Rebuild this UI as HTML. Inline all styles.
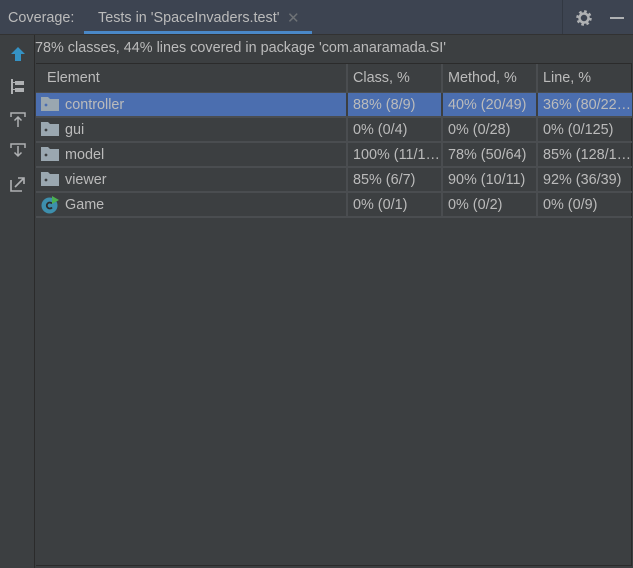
<!DOCTYPE html>
<html><head><style>
*{margin:0;padding:0;box-sizing:border-box}
body{width:633px;height:568px;background:#3c3f41;font-family:"Liberation Sans",sans-serif;font-size:14.4px;color:#bbbbbb;position:relative;overflow:hidden}
.top{position:absolute;left:0;top:0;width:633px;height:35px;background:#3d4451;border-bottom:1px solid #323232}
.top .vl{position:absolute;left:562px;top:0;width:1px;height:34px;background:#323842}
.t{position:absolute;top:10px;white-space:nowrap}
.ul{position:absolute;left:84px;top:31px;width:228px;height:3px;background:#4a88c7}
.side{position:absolute;left:0;top:35px;width:35px;height:533px;border-right:1px solid #2b2b2b}
.sum{position:absolute;left:35px;top:40px;white-space:nowrap}
.tbl{position:absolute;left:36px;top:63px;width:596px;height:503px;border-top:1px solid #2b2b2b;border-bottom:1px solid #2b2b2b;border-right:1px solid #2b2b2b}
.row{position:absolute;left:0;width:596px;height:25px;border-bottom:2px solid #4a4d50}
.row div{position:absolute;top:0;height:23px;line-height:24px;white-space:nowrap;overflow:hidden}
.c1{left:0;width:310px;padding-left:29px}
.c2{left:310px;width:95px;padding-left:5px;border-left:2px solid #4a4d50}
.c3{left:405px;width:95px;padding-left:5px;border-left:2px solid #4a4d50}
.c4{left:500px;width:96px;padding-left:5px;border-left:2px solid #4a4d50}
.hdr{top:0;height:30px}
.hdr div{height:28px;line-height:28px}
.sel{background:#4b6eaf}
.sel .c2,.sel .c3,.sel .c4{border-left-color:#3c3f41}
.fold{position:absolute;left:5px;top:4px;width:18px;height:14px}
</style></head><body>
<div class="top"><div class="vl"></div>
<span class="t" style="left:8px">Coverage:</span>
<span class="t" style="left:98px">Tests in 'SpaceInvaders.test'</span>
<span class="t" style="left:287px;color:#6e7276;font-size:15px;top:9px">✕</span>
<svg style="position:absolute;left:575px;top:9px" width="18" height="18" viewBox="0 0 18 18"><circle cx="9" cy="9" r="6" fill="none" stroke="#afb1b3" stroke-width="3.5" stroke-dasharray="2.4 2.3"/><circle cx="9" cy="9" r="4.5" fill="none" stroke="#afb1b3" stroke-width="2.5"/></svg>
<div style="position:absolute;left:610px;top:17px;width:14px;height:2px;background:#afb1b3"></div>
</div>
<div class="ul"></div>
<div class="side">
<svg style="position:absolute;left:9px;top:10px" width="18" height="18" viewBox="0 0 18 18"><path d="M9 2 L16 9 H12 V16 H6 V9 H2 Z" fill="#3592c4"/></svg>
<svg style="position:absolute;left:9px;top:43px" width="18" height="18" viewBox="0 0 18 18" fill="#afb1b3"><rect x="2" y="1" width="2" height="15"/><rect x="6" y="3" width="9" height="4"/><rect x="6" y="10" width="9" height="4"/><rect x="4" y="4" width="2" height="1"/><rect x="4" y="11" width="2" height="1"/></svg>
<svg style="position:absolute;left:9px;top:76px" width="18" height="18" viewBox="0 0 18 18" fill="none" stroke="#afb1b3" stroke-width="1.5"><path d="M2 6V2H16V6"/><path d="M9 16V6M5.5 9.5L9 6L12.5 9.5"/></svg>
<svg style="position:absolute;left:9px;top:107px" width="18" height="18" viewBox="0 0 18 18" fill="none" stroke="#afb1b3" stroke-width="1.5"><path d="M2 6V2H16V6"/><path d="M9 4V14M5.5 10.5L9 14L12.5 10.5"/></svg>
<svg style="position:absolute;left:9px;top:140px" width="18" height="18" viewBox="0 0 18 18" fill="none" stroke="#afb1b3" stroke-width="1.6"><path d="M2 5V16H13"/><path d="M6 12L15 3M9 3H15V9"/></svg>
</div>
<div class="sum">78% classes, 44% lines covered in package 'com.anaramada.SI'</div>
<div class="tbl">
<div class="row hdr"><div class="c1" style="padding-left:11px">Element</div><div class="c2">Class, %</div><div class="c3">Method, %</div><div class="c4">Line, %</div></div>
<div class="row sel" style="top:29px"><svg class="fold" viewBox="0 0 18 14"><path d="M0 0H7L9 2H18V14H0Z" fill="#9aa7b0"/><circle cx="5" cy="8" r="1.4" fill="#4b6eaf"/></svg><div class="c1">controller</div><div class="c2">88% (8/9)</div><div class="c3">40% (20/49)</div><div class="c4">36% (80/22…</div></div>
<div class="row" style="top:54px"><svg class="fold" viewBox="0 0 18 14"><path d="M0 0H7L9 2H18V14H0Z" fill="#9aa7b0"/><circle cx="5" cy="8" r="1.4" fill="#3c3f41"/></svg><div class="c1">gui</div><div class="c2">0% (0/4)</div><div class="c3">0% (0/28)</div><div class="c4">0% (0/125)</div></div>
<div class="row" style="top:79px"><svg class="fold" viewBox="0 0 18 14"><path d="M0 0H7L9 2H18V14H0Z" fill="#9aa7b0"/><circle cx="5" cy="8" r="1.4" fill="#3c3f41"/></svg><div class="c1">model</div><div class="c2">100% (11/1…</div><div class="c3">78% (50/64)</div><div class="c4">85% (128/1…</div></div>
<div class="row" style="top:104px"><svg class="fold" viewBox="0 0 18 14"><path d="M0 0H7L9 2H18V14H0Z" fill="#9aa7b0"/><circle cx="5" cy="8" r="1.4" fill="#3c3f41"/></svg><div class="c1">viewer</div><div class="c2">85% (6/7)</div><div class="c3">90% (10/11)</div><div class="c4">92% (36/39)</div></div>
<div class="row" style="top:129px"><svg style="position:absolute;left:5px;top:3px" width="18" height="18" viewBox="0 0 18 18"><circle cx="8.5" cy="9.5" r="8" fill="#3d8fad"/><path d="M11 7.5A3 3 0 1 0 11 11.5" fill="none" stroke="#2b2b2b" stroke-width="1.8"/><path d="M11 0L18 4L11 8Z" fill="#4caf50"/></svg><div class="c1">Game</div><div class="c2">0% (0/1)</div><div class="c3">0% (0/2)</div><div class="c4">0% (0/9)</div></div>
</div>
</body></html>
